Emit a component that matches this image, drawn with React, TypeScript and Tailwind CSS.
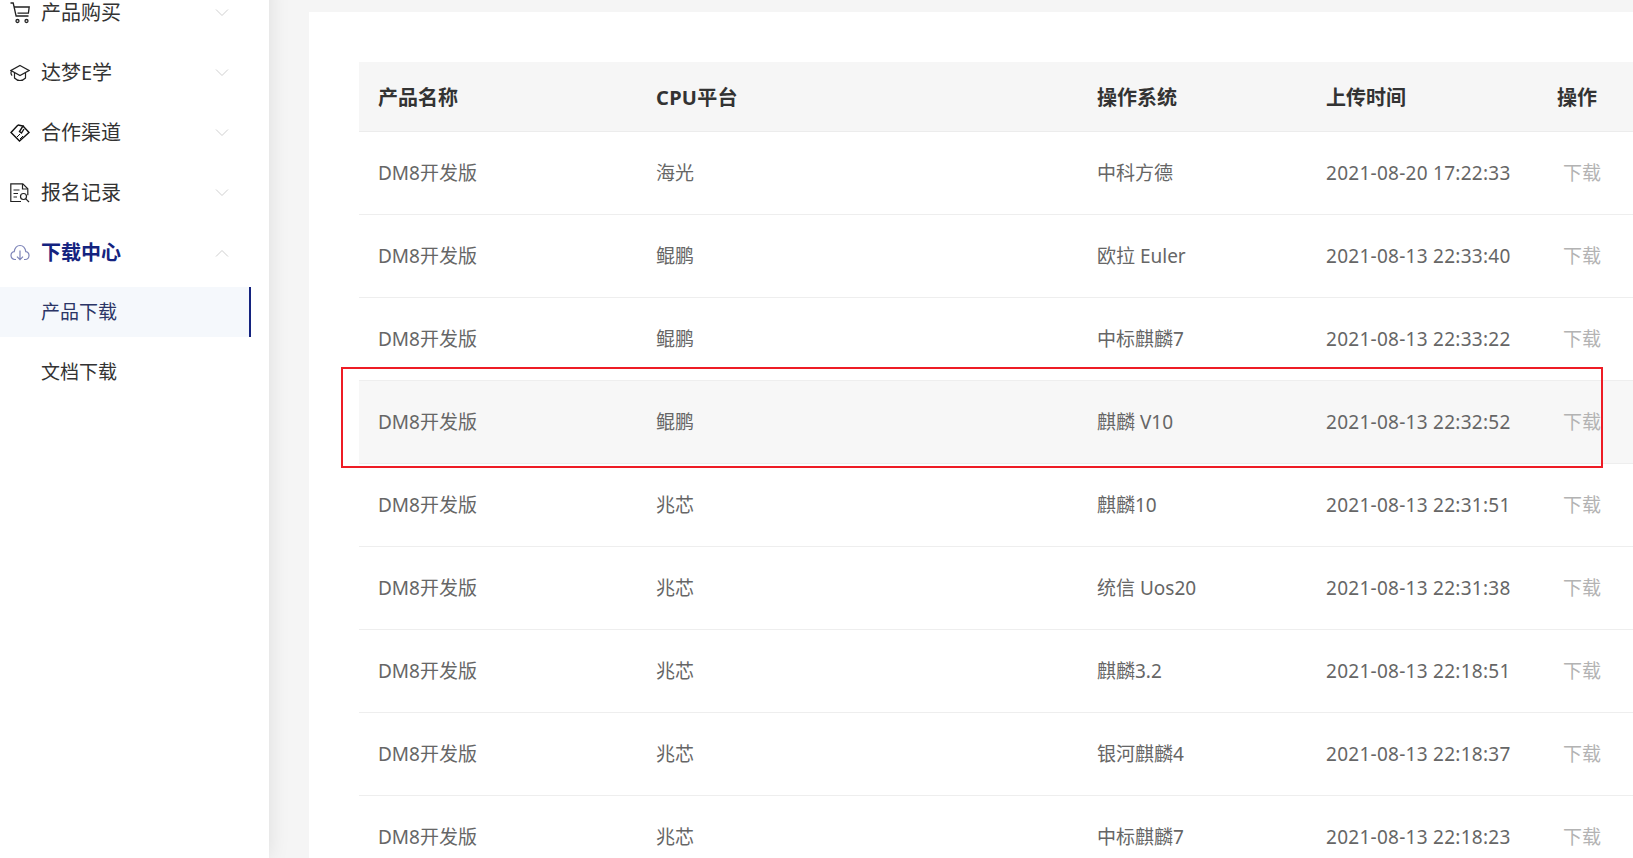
import { ReactNode } from "react";

const font = "font-['Noto_Sans','Noto_Sans_CJK_SC',sans-serif]";

function Chevron({ up }: { up?: boolean }) {
  return (
    <svg width="14" height="8" viewBox="0 0 14 8" fill="none" stroke="#cfcfcf" strokeWidth="1">
      <path d={up ? "M1 7.500 7 1.500l6 6" : "M1 .5l6 6 6-6"} />
    </svg>
  );
}

const CartIcon = (
  <svg width="20" height="22" viewBox="0 0 20 22" fill="none" stroke="#222" strokeWidth="1.3">
    <path d="M.5 1h2.700l2.900 13h12.400" />
    <path d="M4 5h15.200l-.8 6.200H7.500" />
    <circle cx="7.500" cy="19" r="1.500" />
    <circle cx="16.500" cy="19" r="1.500" />
  </svg>
);

const CapIcon = (
  <svg width="20" height="18" viewBox="0 0 20 18" fill="none" stroke="#222" strokeWidth="1.2">
    <path d="M10 1.500 19 6.500 10 11.500 1 6.500z" />
    <path d="M4.500 9v5c1.500 1.600 3.500 2.500 5.500 2.500s4-.9 5.500-2.500V9" />
    <path d="M1.500 7c-.8 1.600-.8 3.200.6 4.600" />
  </svg>
);

const DealIcon = (
  <svg width="20" height="20" viewBox="0 0 20 20" fill="none" stroke="#111" strokeWidth="1.4">
    <path d="M8 2 1 9.500l8.500 8.500 9.500-8.500-6-6.500" />
    <path d="M8 2l5 1-3.500 5.500 2 1.500 2.500-4" />
    <path d="m7 14 3-3M10 16l3-3" strokeWidth="1" />
  </svg>
);

const DocIcon = (
  <svg width="20" height="20" viewBox="0 0 20 20" fill="none" stroke="#222" strokeWidth="1.200">
    <path d="M11 18.500H.8V.8h12l5 5v6.500" />
    <path d="M12.500 1v5h5" />
    <path d="M3.500 7h6M3.500 10.500h4.500M3.500 14h3.500" />
    <circle cx="13.500" cy="13.500" r="3" />
    <path d="m15.800 15.800 3.200 3.200" />
  </svg>
);

const CloudIcon = (
  <svg width="20" height="18" viewBox="0 0 20 18" fill="none" stroke="#7d84b8" strokeWidth="1.200">
    <path d="M6 15.500H4.800C2.500 15.500 1 13.500 1 11.500c0-2 1.300-3.500 3.200-3.800C4.800 4 7 1.500 10 1.500s5.200 2.500 5.800 6.200c1.900.3 3.200 1.800 3.200 3.800 0 2-1.500 4-3.800 4H14" />
    <path d="M10 6.500v9M7 12.700l3 3 3-3" />
  </svg>
);

function MenuRow({ icon, label, active }: { icon: ReactNode; label: string; active?: boolean }) {
  return (
    <div className="h-[60px] flex items-center">
      <span className="w-[41px] pl-[10px] flex items-center shrink-0">{icon}</span>
      <span className={active ? "text-[20px] font-bold text-[#14237f]" : "text-[20px] text-[#333]"}>{label}</span>
      <span className="ml-auto mr-[40px] flex"><Chevron up={active} /></span>
    </div>
  );
}

const rows = [
  ["海光", "中科方德", "2021-08-20 17:22:33"],
  ["鲲鹏", "欧拉 Euler", "2021-08-13 22:33:40"],
  ["鲲鹏", "中标麒麟7", "2021-08-13 22:33:22"],
  ["鲲鹏", "麒麟 V10", "2021-08-13 22:32:52"],
  ["兆芯", "麒麟10", "2021-08-13 22:31:51"],
  ["兆芯", "统信 Uos20", "2021-08-13 22:31:38"],
  ["兆芯", "麒麟3.2", "2021-08-13 22:18:51"],
  ["兆芯", "银河麒麟4", "2021-08-13 22:18:37"],
  ["兆芯", "中标麒麟7", "2021-08-13 22:18:23"],
];

export default function App() {
  return (
    <div className={`${font} h-screen flex overflow-hidden bg-[#f5f5f5]`}>
      <aside className="w-[269px] shrink-0 bg-white shadow-[0_0_20px_rgba(0,0,0,0.1)] -mt-[17px] relative">
        <MenuRow icon={CartIcon} label="产品购买" />
        <MenuRow icon={CapIcon} label="达梦E学" />
        <MenuRow icon={DealIcon} label="合作渠道" />
        <MenuRow icon={DocIcon} label="报名记录" />
        <MenuRow icon={CloudIcon} label="下载中心" active />
        <div className="w-[251px] h-[50px] mt-[4px] pl-[41px] pt-[1px] flex items-center bg-[#f5f8fc] border-r-2 border-[#14237f] text-[19px] text-[#2b3566]">
          产品下载
        </div>
        <div className="h-[50px] mt-[10px] pl-[41px] flex items-center text-[19px] text-[#333]">文档下载</div>
      </aside>

      <main className="flex-1 min-w-0 pl-[40px] pt-[12px]">
        <div className="relative h-[900px] bg-white pl-[50px] pt-[50px]">
          <table className="w-[1300px] table-fixed border-collapse text-left">
            <colgroup>
              <col className="w-[279px]" />
              <col className="w-[441px]" />
              <col className="w-[229px]" />
              <col className="w-[232px]" />
              <col />
            </colgroup>
            <thead>
              <tr className="h-[69px] bg-[#f6f6f6] border-b border-[#ececec] text-[20px] text-[#333]">
                <th className="pl-[19px] pt-[3px] font-bold">产品名称</th>
                <th className="pl-[18px] pt-[3px] font-bold tracking-[0.3px]">CPU平台</th>
                <th className="pl-[18px] pt-[3px] font-bold">操作系统</th>
                <th className="pl-[18px] pt-[3px] font-bold">上传时间</th>
                <th className="pl-[17px] pt-[3px] font-bold">操作</th>
              </tr>
            </thead>
            <tbody className="text-[19px] text-[#666]">
              {rows.map((r, i) => (
                <tr key={i} className={`h-[83px] border-b border-[#eeeeee] ${i === 3 ? "bg-[#f7f7f7]" : ""}`}>
                  <td className="pl-[19px] pt-[2px]">DM8开发版</td>
                  <td className="pl-[18px] pt-[2px]">{r[0]}</td>
                  <td className="pl-[18px] pt-[2px]">{r[1]}</td>
                  <td className="pl-[18px] pt-[2px] tracking-[0.27px]">{r[2]}</td>
                  <td className="pl-[23px] pt-[2px] text-[#b3b3b3]">下载</td>
                </tr>
              ))}
            </tbody>
          </table>
          {/* annotation box drawn over the table */}
          <div className="absolute left-[32px] top-[355px] w-[1262px] h-[101px] border-2 border-[#ee1c25]" />
        </div>
      </main>
    </div>
  );
}
